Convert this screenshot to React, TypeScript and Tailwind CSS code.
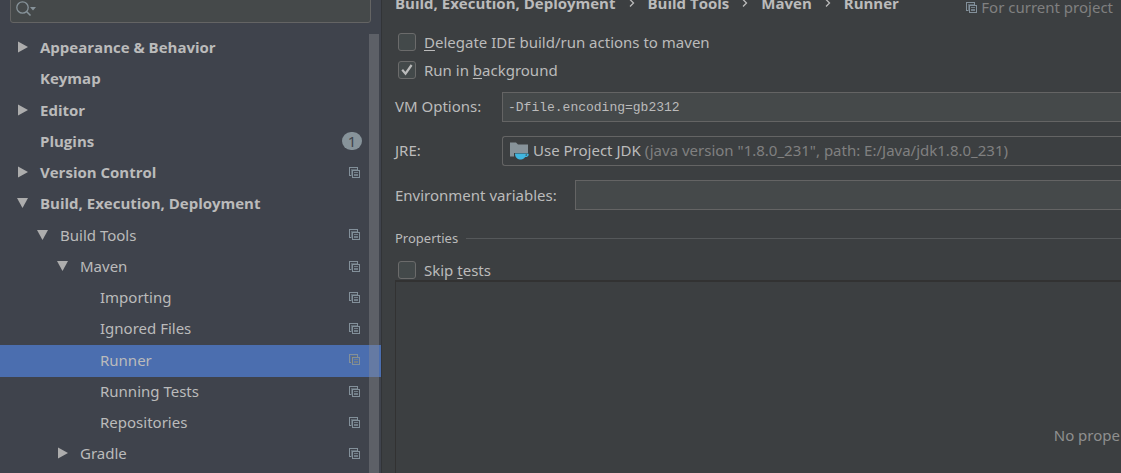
import type { ReactNode } from "react";

type TreeItem = {
  label: string;
  level: 0 | 1 | 2 | 3;
  state?: "open" | "closed";
  project?: boolean;
  badge?: string;
  selected?: boolean;
};

const items: TreeItem[] = [
  { label: "Appearance & Behavior", level: 0, state: "closed" },
  { label: "Keymap", level: 0 },
  { label: "Editor", level: 0, state: "closed" },
  { label: "Plugins", level: 0, badge: "1" },
  { label: "Version Control", level: 0, state: "closed", project: true },
  { label: "Build, Execution, Deployment", level: 0, state: "open" },
  { label: "Build Tools", level: 1, state: "open", project: true },
  { label: "Maven", level: 2, state: "open", project: true },
  { label: "Importing", level: 3, project: true },
  { label: "Ignored Files", level: 3, project: true },
  { label: "Runner", level: 3, project: true, selected: true },
  { label: "Running Tests", level: 3, project: true },
  { label: "Repositories", level: 3, project: true },
  { label: "Gradle", level: 2, state: "closed", project: true },
];

const indents = ["pl-4", "pl-9", "pl-14", "pl-19"];

function ProjectIcon() {
  return (
    <svg className="size-[11px] shrink-0" viewBox="0 0 11 11" aria-hidden="true" shapeRendering="crispEdges">
      <path d="M0 0h9v3H8V1H1v7h1v1H0z" fill="#83909a" />
      <path d="M2 2h6v1H3v6H2z" fill="#626d76" />
      <path d="M3 3h8v8H3zM4 4v6h6V4z" fill="#83909a" fillRule="evenodd" />
      <path d="M5 5h4v1H5zM5 7h4v2H5z" fill="#727e88" />
    </svg>
  );
}

function Arrow({ state }: { state?: "open" | "closed" }) {
  return (
    <svg className="size-3 shrink-0" viewBox="0 0 12 12" fill="#adadad" aria-hidden="true">
      {state === "closed" && <path d="M2 0.5 12 6 2 11.5z" />}
      {state === "open" && <path d="M1 1h11L6.5 11z" />}
    </svg>
  );
}

function TreeRow({ item }: { item: TreeItem }) {
  return (
    <li className={`h-[31px] nth-[4n+3]:h-8 ${item.selected ? "bg-[#4b6eaf]" : ""}`}>
      <a
        href="#"
        aria-current={item.selected ? "page" : undefined}
        className={`flex h-full items-center gap-3 pr-[21px] pb-[3px] ${indents[item.level]}`}
      >
        <Arrow state={item.state} />
        <span className={`grow whitespace-nowrap ${item.level === 0 ? "font-['Open_Sans','Noto_Sans',sans-serif] font-bold" : ""}`}>
          {item.label}
        </span>
        {item.project && <ProjectIcon />}
        {item.badge && (
          <span className="-mr-0.5 flex h-[18px] w-5 items-center justify-center rounded-full bg-[#87939a] text-[15px] text-[#3f434b]">
            {item.badge}
          </span>
        )}
      </a>
    </li>
  );
}

function Check({ id, checked, children }: { id: string; checked?: boolean; children: ReactNode }) {
  return (
    <div className="flex h-7 items-center gap-2">
      <span className="relative ml-[3px] flex size-[18px]">
        <input
          id={id}
          type="checkbox"
          defaultChecked={checked}
          className="peer size-[18px] appearance-none rounded-[3px] border border-[#6b6b6b] bg-[#43494a]"
        />
        <svg className="pointer-events-none absolute inset-0 hidden size-[18px] peer-checked:block" viewBox="0 0 18 18" fill="none" stroke="#bbbbbb" strokeWidth="2.2" aria-hidden="true">
          <path d="M4.2 8.8 7.5 12.6 13.6 4" />
        </svg>
      </span>
      <label htmlFor={id}>{children}</label>
    </div>
  );
}

function JdkIcon() {
  return (
    <svg className="h-[18px] w-5 shrink-0" viewBox="0 0 20 18" aria-hidden="true">
      <path d="M1 .5h6l2 2h10V11H5v3.500H1z" fill="#87939a" />
      <path d="M6 11.500h13c1.300.600 1 3.400-2.800 3.600-1 1.700-2.400 2.400-4 2.400C8.500 17.500 6 15.500 6 11.500z" fill="#40b6e0" />
      <path d="M16.700 12.600h1.300c.3.500-.2 1.200-1.300 1.300z" fill="#3c3f41" />
    </svg>
  );
}

const crumbs = ["Build, Execution, Deployment", "Build Tools", "Maven", "Runner"];
const underline = "underline decoration-1 underline-offset-2";

export default function App() {
  return (
    <div className="flex h-screen overflow-hidden bg-[#3c3f41] font-['Noto_Sans','Open_Sans',sans-serif] text-[15px] leading-5 text-[#bbbbbb]">
      <nav aria-label="Settings" className="flex w-[382px] shrink-0 flex-col border-r border-[#323437] bg-[#3f434c]">
        <div className="-mt-1 mr-2.5 ml-2.5 flex h-[27px] shrink-0 items-center rounded-[3px] border border-[#646464] bg-[#45494a] pb-0.5 pl-[5px]">
          <svg className="h-4 w-5 shrink-0" viewBox="0 0 20 16" fill="none" aria-hidden="true">
            <circle cx="6.500" cy="6.500" r="5.700" stroke="#87939a" strokeWidth="1.300" />
            <path d="m10.500 10.500 4 4" stroke="#87939a" strokeWidth="1.600" />
            <path d="M14 6h6l-3 3.500z" fill="#87939a" />
          </svg>
          <input type="search" aria-label="Search settings" className="min-w-0 grow appearance-none bg-transparent outline-none" />
        </div>
        <div className="relative mt-2.5 min-h-0 grow">
          <ul>
            {items.map((item) => (
              <TreeRow key={item.label} item={item} />
            ))}
          </ul>
          <div className="absolute top-px right-0.5 bottom-0 w-2.5 bg-[#8c8c91]/40" />
        </div>
      </nav>

      <main className="flex min-w-0 grow flex-col pl-[13px]">
        <header className="-mt-2 flex h-6 shrink-0 items-center pr-2 whitespace-nowrap">
          <ol className="flex grow items-center pb-0.5 font-['Open_Sans','Noto_Sans',sans-serif] font-bold">
            {crumbs.map((crumb, i) => (
              <li key={crumb} className="flex items-center">
                {i > 0 && (
                  <svg className="mx-[13px] h-2 w-1.5" viewBox="0 0 6 8" fill="none" stroke="#bbbbbb" strokeWidth="1.300" aria-hidden="true">
                    <path d="m1 .5 3.500 3.500L1 7.500" />
                  </svg>
                )}
                {crumb}
              </li>
            ))}
          </ol>
          <span className="mt-1.5 flex items-center gap-1 text-[#808080]">
            <ProjectIcon />
            For current project
          </span>
        </header>

        <div className="mt-3">
          <Check id="delegate">
            <span className={underline}>D</span>elegate IDE build/run actions to maven
          </Check>
          <Check id="background" checked>
            Run in <span className={underline}>b</span>ackground
          </Check>
        </div>

        <div className="mt-2 flex h-[30px] shrink-0 items-center">
          <label htmlFor="vm" className="w-[107px] shrink-0 pb-0.5">VM Options:</label>
          <input
            id="vm"
            defaultValue="-Dfile.encoding=gb2312"
            className="h-full min-w-0 grow border border-r-0 border-[#646464] bg-[#45494a] px-[5px] font-['Liberation_Mono',monospace] text-[13px] outline-none"
          />
        </div>

        <div className="mt-3.5 flex h-[30px] shrink-0 items-center">
          <label htmlFor="jre" className="w-[107px] shrink-0 pb-0.5">JRE:</label>
          <div className="relative flex h-full min-w-0 grow items-center gap-1 rounded-l-[3px] border border-r-0 border-[#646464] pl-1.5 whitespace-nowrap">
            <JdkIcon />
            <span className="pb-0.5">
              Use Project JDK <span className="text-[#808080]">(java version "1.8.0_231", path: E:/Java/jdk1.8.0_231)</span>
            </span>
            <select id="jre" className="absolute inset-0 size-full appearance-none opacity-0">
              <option>Use Project JDK</option>
            </select>
          </div>
        </div>

        <div className="mt-3.5 flex h-[30px] shrink-0 items-center">
          <label htmlFor="env" className="w-[180px] shrink-0">Environment variables:</label>
          <input id="env" className="h-full min-w-0 grow border border-r-0 border-[#646464] bg-[#45494a] px-1.5 outline-none" />
        </div>

        <fieldset className="mt-4 flex min-h-0 min-w-0 grow flex-col">
          <div className="flex h-6 shrink-0 items-center gap-2">
            <h2 className="text-[13px]">Properties</h2>
            <div className="h-px grow bg-[#55585a]" />
          </div>
          <div className="mt-1.5 h-6 shrink-0">
            <Check id="skip">
              Skip <span className={underline}>t</span>ests
            </Check>
          </div>
          <div className="flex grow items-end justify-end border-t-2 border-l border-[#323232] pr-px pb-7 text-[#8f8f8f]">
            No prope
          </div>
        </fieldset>
      </main>
    </div>
  );
}
